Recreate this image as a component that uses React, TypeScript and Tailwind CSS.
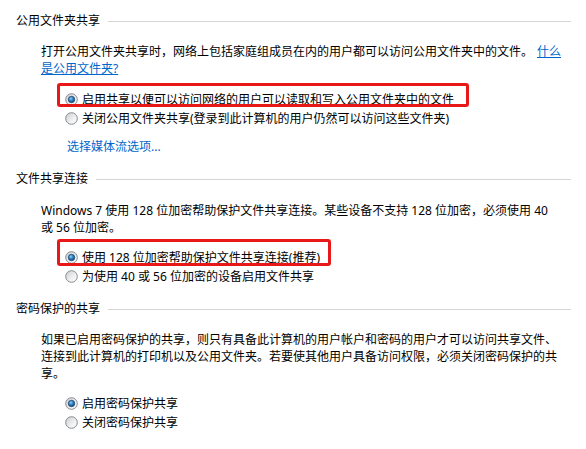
import React, { FC, ReactNode, useId } from 'react';

interface RadioOption {
  label: ReactNode;
  checked?: boolean;
  // hand-drawn red marker around the option (offsets from the row)
  mark?: { top: string; height: string; width: string };
}

const RadioDot: FC<{ checked?: boolean }> = ({ checked }) => {
  const id = useId();
  return (
    <svg width="13" height="13" viewBox="0 0 13 13" className="shrink-0">
      <defs>
        <linearGradient id={`${id}-bg`} x1="0" y1="0" x2="1" y2="1">
          <stop offset="0" stopColor="#c9cbce" />
          <stop offset="0.55" stopColor="#eeeff0" />
          <stop offset="1" stopColor="#ffffff" />
        </linearGradient>
        <radialGradient id={`${id}-dot`} cx="0.4" cy="0.35" r="0.7">
          <stop offset="0" stopColor="#8fd0f5" />
          <stop offset="0.5" stopColor="#2f7fc4" />
          <stop offset="1" stopColor="#123f6e" />
        </radialGradient>
      </defs>
      <circle cx="6.5" cy="6.5" r="5.8" fill={`url(#${id}-bg)`} stroke="#868a90" strokeWidth="1" />
      {checked && <circle cx="6.5" cy="6.5" r="3.2" fill={`url(#${id}-dot)`} stroke="#1a4671" strokeWidth="0.8" />}
    </svg>
  );
};

const SectionHeader: FC<{ title: string; className?: string }> = ({ title, className }) => (
  <div className={`flex items-center h-4 gap-[8px] ${className ?? ''}`}>
    <span className="whitespace-nowrap">{title}</span>
    <div className="flex-1 h-px bg-[#d5d5d5]" />
  </div>
);

const RadioGroup: FC<{ options: RadioOption[]; className?: string }> = ({ options, className }) => (
  <div className={`ml-[49px] ${className ?? ''}`}>
    {options.map((opt, i) => (
      <div key={i} className="relative flex items-center h-[19px]">
        <RadioDot checked={opt.checked} />
        <span className="ml-[4px] whitespace-nowrap">{opt.label}</span>
        {opt.mark && (
          <div
            className={`absolute left-[-8px] border-[3px] border-[#e81818] rounded-[3px] pointer-events-none ${opt.mark.top} ${opt.mark.height} ${opt.mark.width}`}
          />
        )}
      </div>
    ))}
  </div>
);

const publicFolderOptions: RadioOption[] = [
  {
    label: '启用共享以便可以访问网络的用户可以读取和写入公用文件夹中的文件',
    checked: true,
    mark: { top: 'top-[-7px]', height: 'h-[24px]', width: 'w-[412px]' },
  },
  { label: '关闭公用文件夹共享(登录到此计算机的用户仍然可以访问这些文件夹)' },
];

const connectionOptions: RadioOption[] = [
  {
    label: '使用 128 位加密帮助保护文件共享连接(推荐)',
    checked: true,
    mark: { top: 'top-[-9px]', height: 'h-[27px]', width: 'w-[274px]' },
  },
  { label: '为使用 40 或 56 位加密的设备启用文件共享' },
];

const passwordOptions: RadioOption[] = [{ label: '启用密码保护共享', checked: true }, { label: '关闭密码保护共享' }];

const App: FC = () => {
  return (
    <div
      className="w-[586px] h-[449px] bg-white text-[#000] text-[12px] pl-[16px] pr-[15px] overflow-hidden"
      style={{ fontFamily: '"Noto Sans", "Noto Sans CJK SC", sans-serif' }}
    >
      {/* 公用文件夹共享 */}
      <SectionHeader title="公用文件夹共享" className="mt-[13px]" />
      <p className="mt-[14px] ml-[25px] leading-[17px] whitespace-nowrap">
        打开公用文件夹共享时，网络上包括家庭组成员在内的用户都可以访问公用文件夹中的文件。
        <a className="text-[#0066cc] underline ml-[4px] cursor-pointer">
          什么
          <br />
          是公用文件夹?
        </a>
      </p>
      <RadioGroup options={publicFolderOptions} className="mt-[13px]" />
      <a className="block mt-[10px] ml-[51px] leading-[17px] text-[#0066cc] cursor-pointer">选择媒体流选项...</a>

      {/* 文件共享连接 */}
      <SectionHeader title="文件共享连接" className="mt-[16px]" />
      <p className="mt-[15px] ml-[25px] leading-[17px] whitespace-nowrap">
        Windows 7 使用 128 位加密帮助保护文件共享连接。某些设备不支持 128 位加密，必须使用 40
        <br />或 56 位加密。
      </p>
      <RadioGroup options={connectionOptions} className="mt-[12px]" />

      {/* 密码保护的共享 */}
      <SectionHeader title="密码保护的共享" className="mt-[15px]" />
      <p className="mt-[14px] ml-[25px] leading-[17px] whitespace-nowrap">
        如果已启用密码保护的共享，则只有具备此计算机的用户帐户和密码的用户才可以访问共享文件、
        <br />
        连接到此计算机的打印机以及公用文件夹。若要使其他用户具备访问权限，必须关闭密码保护的共
        <br />
        享。
      </p>
      <RadioGroup options={passwordOptions} className="mt-[12px]" />
    </div>
  );
};

export default App;
